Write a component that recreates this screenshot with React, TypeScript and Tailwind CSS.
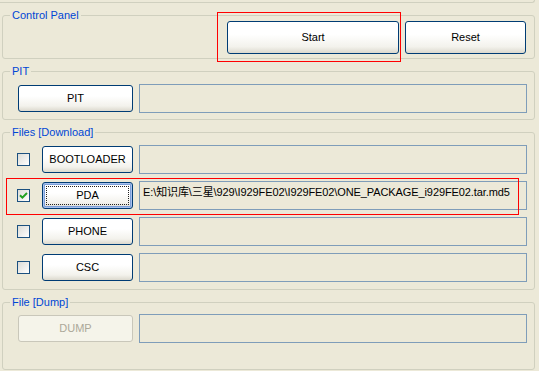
import React from "react";

const font = "font-['Liberation_Sans','Noto_Sans_CJK_SC',sans-serif]";

function GroupBox({ label, className, children }: { label?: string; className: string; children?: React.ReactNode }) {
  return (
    <div className={`relative rounded-[3px] border border-[#D0D0BF] ${className}`}>
      {label ? (
        <span className="absolute -top-[8px] left-[7px] bg-[#ECE9D8] px-[2px] leading-[14px] text-[#0046D5]">{label}</span>
      ) : null}
      {children}
    </div>
  );
}

function XpButton({ label, className, focused, disabled }: { label: string; className: string; focused?: boolean; disabled?: boolean }) {
  if (disabled) {
    return (
      <button
        type="button"
        className={`shrink-0 rounded-[3px] border border-[#C9C7BA] bg-[#F5F4EA] text-[#ACA899] ${className}`}
      >
        {label}
      </button>
    );
  }
  return (
    <button
      type="button"
      className={`relative shrink-0 rounded-[3px] border border-[#003C74] bg-gradient-to-b from-white from-40% via-[#F3F2EC] via-80% to-[#DCD9CE] text-black ${
        focused ? "shadow-[inset_0_0_0_1px_#A9C3EE,inset_0_0_0_2px_#7D9FD9]" : ""
      } ${className}`}
    >
      {focused ? <span className="pointer-events-none absolute inset-[3px] border border-dotted border-[#222]" /> : null}
      {label}
    </button>
  );
}

function PathBox({ value }: { value?: string }) {
  return (
    <div className="h-[29px] flex-1 overflow-hidden whitespace-nowrap border border-[#7F9DB9] bg-[#ECE9D8] pl-[3px] pt-[3px] leading-[14px] tracking-[-0.1px] text-black">
      {value}
    </div>
  );
}

function CheckBox({ checked }: { checked?: boolean }) {
  return (
    <span className="flex h-[13px] w-[13px] shrink-0 items-center justify-center border border-[#1C5180] bg-gradient-to-br from-[#DCDCD7] to-white">
      {checked ? (
        <svg width="9" height="9" viewBox="0 0 9 9">
          <path d="M1 4.2 L3.4 6.6 L8 2" fill="none" stroke="#21A121" strokeWidth="2" />
        </svg>
      ) : null}
    </span>
  );
}

const files = [
  { label: "BOOTLOADER", checked: false, value: "" },
  { label: "PDA", checked: true, value: "E:\\知识库\\三星\\929\\I929FE02\\I929FE02\\ONE_PACKAGE_i929FE02.tar.md5", focused: true },
  { label: "PHONE", checked: false, value: "" },
  { label: "CSC", checked: false, value: "" },
];

export default function App() {
  return (
    <div className={`relative h-[371px] w-[539px] overflow-hidden bg-[#ECE9D8] text-[11px] ${font}`}>
      <div className="h-[3px] w-[535px] rounded-br-[3px] border-b border-r border-[#D0D0BF]" />
      <div className="ml-[2px] mt-[12px] flex w-[533px] flex-col gap-[12px]">
        <GroupBox label="Control Panel" className="h-[44px]">
          <div className="flex justify-end gap-[6px] pr-[8px] pt-[5px]">
            <XpButton label="Start" className="h-[33px] w-[172px]" />
            <XpButton label="Reset" className="h-[33px] w-[121px]" />
          </div>
        </GroupBox>
        <GroupBox label="PIT" className="h-[49px]">
          <div className="flex items-center gap-[6px] pl-[15px] pr-[7px] pt-[12px]">
            <XpButton label="PIT" className="h-[27px] w-[115px]" />
            <PathBox />
          </div>
        </GroupBox>
        <GroupBox label="Files [Download]" className="h-[158px]">
          <div className="flex flex-col gap-[7px] pl-[14px] pr-[7px] pt-[12px]">
            {files.map((f) => (
              <div key={f.label} className="flex items-center">
                <CheckBox checked={f.checked} />
                <XpButton label={f.label} focused={f.focused} className="ml-[12px] mr-[6px] h-[27px] w-[91px]" />
                <PathBox value={f.value} />
              </div>
            ))}
          </div>
        </GroupBox>
        <GroupBox label="File [Dump]" className="h-[68px]">
          <div className="flex items-center gap-[6px] pl-[15px] pr-[7px] pt-[11px]">
            <XpButton label="DUMP" disabled className="h-[27px] w-[115px]" />
            <PathBox />
          </div>
        </GroupBox>
      </div>
      <div className="pointer-events-none absolute left-[217px] top-[12px] h-[50px] w-[184px] border border-[#FF0000]" />
      <div className="pointer-events-none absolute left-[6px] top-[178px] h-[37px] w-[513px] border border-[#FF0000]" />
    </div>
  );
}
